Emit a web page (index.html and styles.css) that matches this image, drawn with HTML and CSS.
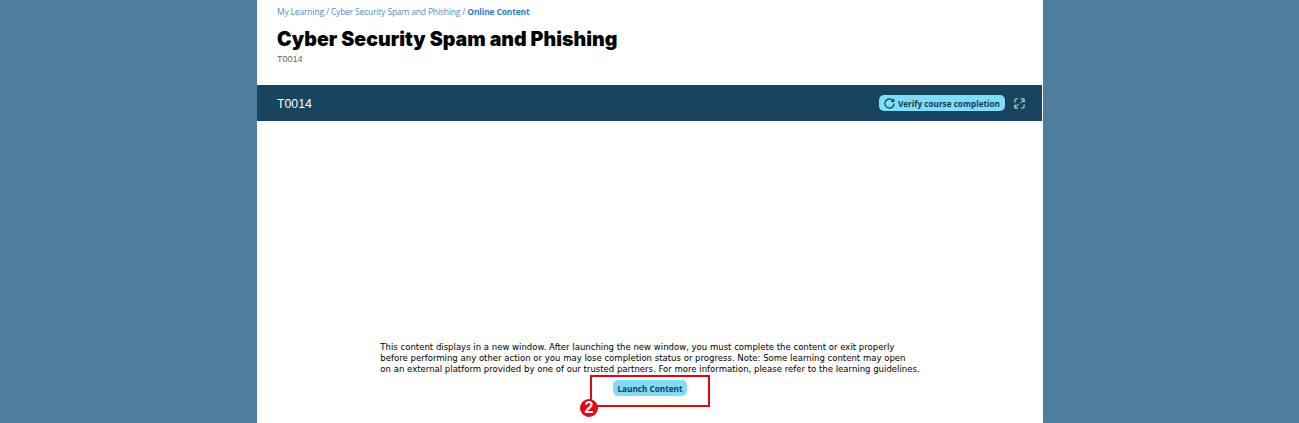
FILE: index.html
```html
<!DOCTYPE html>
<html lang="en">
<head>
  <meta charset="UTF-8">
  <title>Cyber Security Spam and Phishing</title>
  <link rel="stylesheet" href="styles.css">
</head>
<body>
  <div class="page">
    <div class="page-header">
      <div class="breadcrumb">
        <a>My Learning</a> / <a>Cyber Security Spam and Phishing</a> / <b>Online Content</b>
      </div>
      <h1>Cyber Security Spam and Phishing</h1>
      <div class="course-id">T0014</div>
    </div>
    <div class="content-bar">
      <span class="bar-title">T0014</span>
      <button class="verify-btn">
        <svg width="11" height="11" viewBox="0 0 12 12" fill="none" stroke="#0f3b56" stroke-width="1.3">
          <path d="M10.2 3.2A5 5 0 1 0 11 6"/>
          <path d="M10.6 0.8V3.6H7.8"/>
        </svg>
        Verify course completion
      </button>
      <svg class="expand-icon" width="11" height="11" viewBox="0 0 12 12" fill="none" stroke="#fff" stroke-width="1">
        <path d="M1 5V2.5Q1 1 2.5 1H4M7.5 1H11V4.5L9.5 3L7 5.5M11 7V9.5Q11 11 9.5 11H8M4.5 11H1V7.5L2.5 9L5 6.5"/>
      </svg>
    </div>
    <div class="launch">
      <p>This content displays in a new window. After launching the new window, you must complete the content or exit properly<br>before performing any other action or you may lose completion status or progress. Note: Some learning content may open<br>on an external platform provided by one of our trusted partners. For more information, please refer to the learning guidelines.</p>
      <div class="launch-action">
        <button class="launch-btn">Launch Content</button>
        <div class="callout-box"></div>
        <div class="callout-num">2</div>
      </div>
    </div>
  </div>
</body>
</html>
```

FILE: styles.css
```css
html, body {
  height: 423px;
  overflow: hidden;
}
body {
  margin: 0;
  background-color: #4d7f9e;
  background-image: repeating-conic-gradient(#4a7c9b 0 25%, #507fa0 0 50%);
  background-size: 2px 2px;
  font-family: "Liberation Sans", Arial, sans-serif;
}
.page {
  width: 786px;
  height: 423px;
  margin-left: 257px;
  background-color: #ffffff;
  display: flex;
  flex-direction: column;
}
.page-header {
  height: 85px;
  box-sizing: border-box;
  padding: 6px 20px 0;
}
.breadcrumb {
  font-family: "Open Sans", sans-serif;
  font-size: 8.5px;
  line-height: 11px;
  color: #4f8fd0;
  letter-spacing: -0.17px;
}
.breadcrumb b {
  color: #2f7fc8;
}
h1 {
  margin: 9px 0 0;
  font-family: Inter, sans-serif;
  font-weight: 900;
  font-size: 19.6px;
  line-height: 26px;
  color: #000000;
}
.course-id {
  margin-top: 1px;
  font-size: 9px;
  line-height: 12px;
  color: #666666;
}
.content-bar {
  height: 36px;
  width: 785px;
  background-color: #19445f;
  display: flex;
  align-items: center;
  padding: 0 17px 0 20px;
  box-sizing: border-box;
}
.bar-title {
  flex-grow: 1;
  padding-top: 1px;
  font-size: 12.3px;
  color: #ffffff;
}
.verify-btn {
  display: flex;
  align-items: center;
  gap: 3px;
  height: 16px;
  padding: 0 5px;
  border: none;
  border-radius: 5px;
  background-color: #81dcf9;
  color: #0f3b56;
  font-family: "Open Sans", sans-serif;
  font-weight: 700;
  font-size: 8.2px;
}
.expand-icon {
  margin-left: 9px;
}
.launch {
  flex-grow: 1;
  display: flex;
  flex-direction: column;
  align-items: center;
  padding-top: 221px;
}
.launch p {
  margin: 0;
  font-family: "DejaVu Sans", sans-serif;
  font-size: 8.54px;
  line-height: 11px;
  color: #000000;
  white-space: nowrap;
}
.launch-action {
  position: relative;
  margin-top: 5px;
}
.launch-btn {
  display: block;
  height: 16px;
  width: 74px;
  padding: 0;
  border: none;
  border-radius: 5px;
  background-color: #81dcf9;
  color: #0f3b56;
  font-family: "Open Sans", sans-serif;
  font-weight: 700;
  font-size: 8.2px;
}
.callout-box {
  position: absolute;
  left: -23px;
  top: -5px;
  width: 116px;
  height: 28px;
  border: 2px solid #e30613;
}
.callout-num {
  position: absolute;
  left: -33px;
  top: 19px;
  width: 18px;
  height: 18px;
  border-radius: 50%;
  background-color: #e30613;
  color: #ffffff;
  font-weight: 700;
  font-size: 16px;
  line-height: 18px;
  text-align: center;
}
```
